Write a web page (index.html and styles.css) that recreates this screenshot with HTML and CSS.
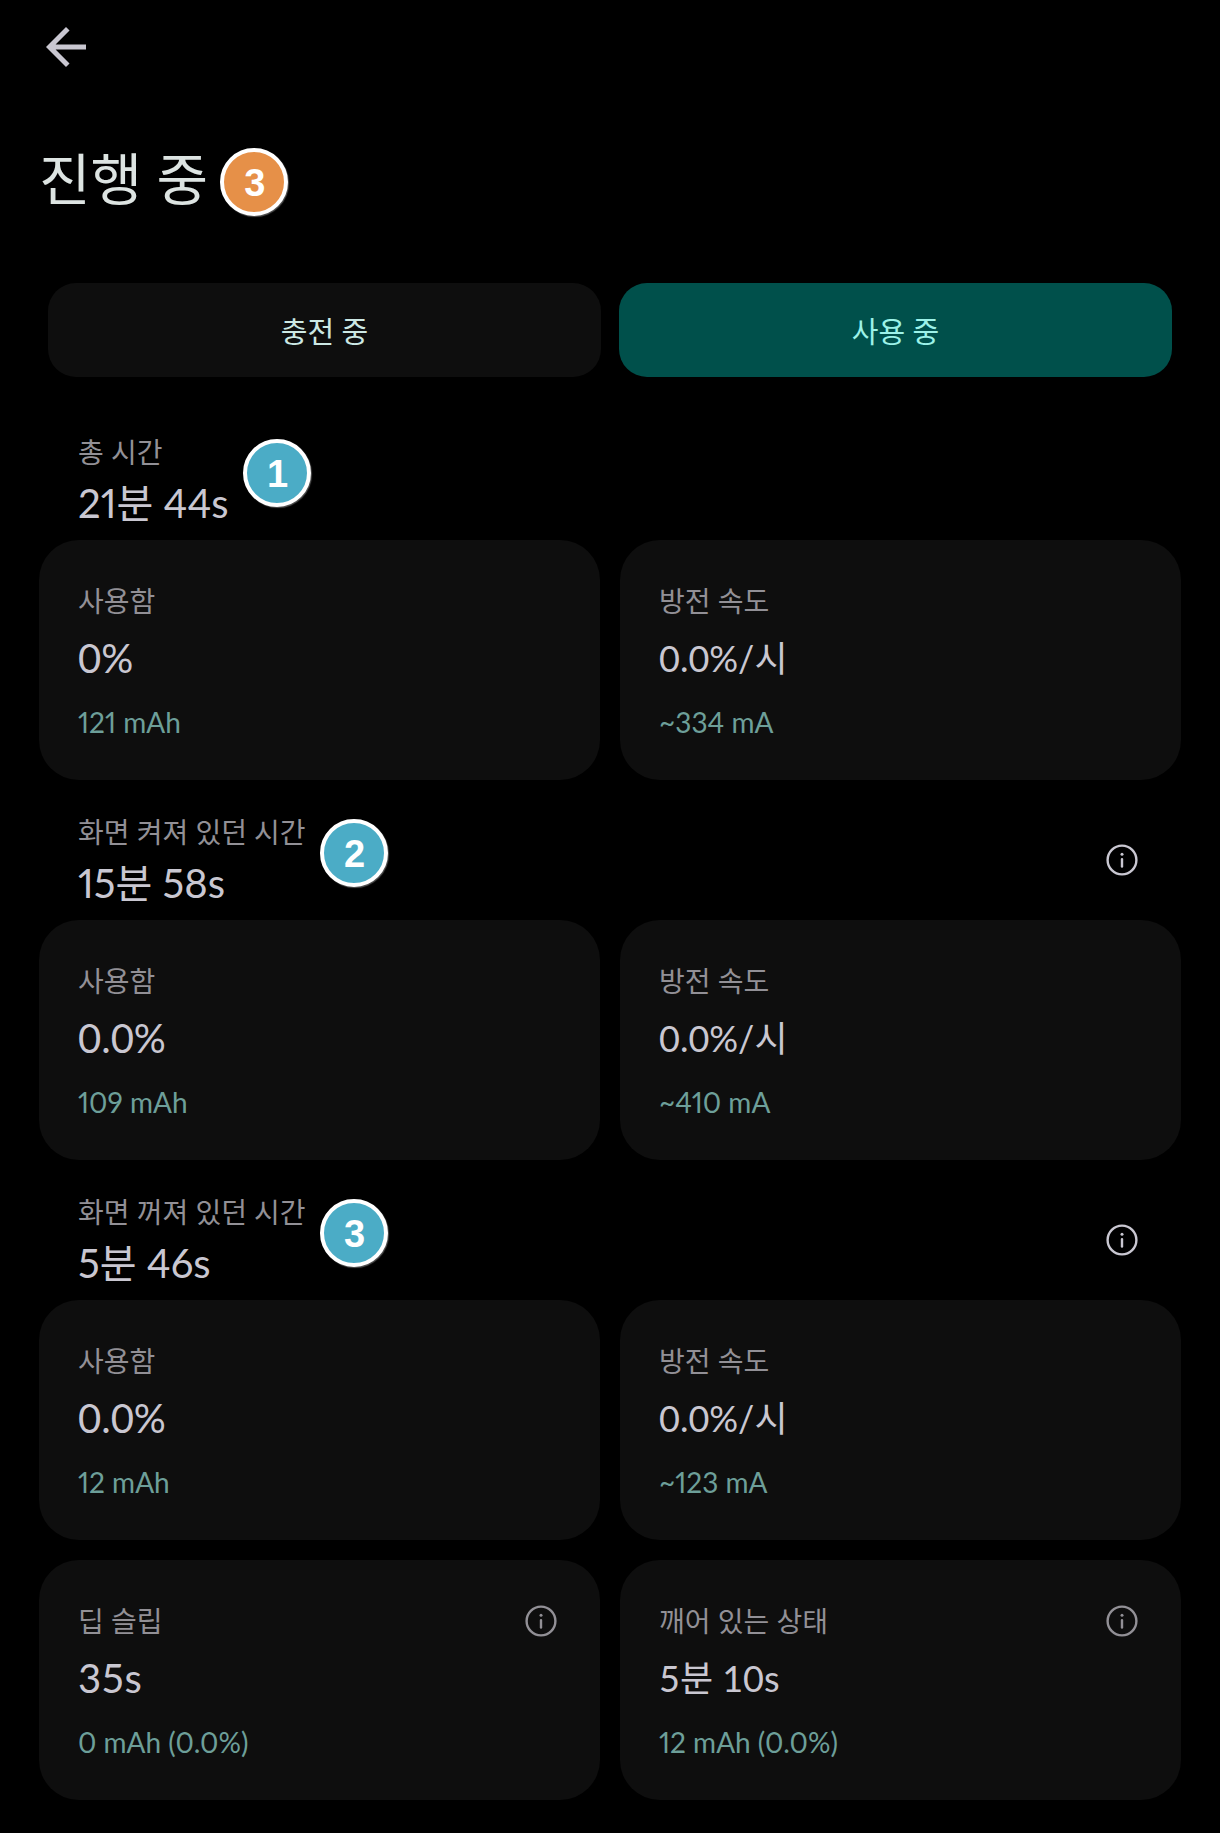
FILE: index.html
```html
<!DOCTYPE html>
<html lang="ko">
<head>
    <meta charset="UTF-8">
    <meta name="viewport" content="width=device-width, initial-scale=1">
    <title>진행 중</title>
    <link rel="stylesheet" href="styles.css">
</head>
<body>
    <!-- Shared info icon -->
    <svg class="sprite" aria-hidden="true">
        <symbol id="info" viewBox="0 0 24 24">
            <circle cx="12" cy="12" r="9.6" fill="none" stroke="currentColor" stroke-width="1.6"/>
            <circle cx="12" cy="8.1" r="1" fill="currentColor"/>
            <path d="M12 11.4v5" fill="none" stroke="currentColor" stroke-width="1.6" stroke-linecap="round"/>
        </symbol>
    </svg>

    <main class="page">
        <button class="back" type="button" aria-label="뒤로">
            <svg viewBox="4 4 16 16"><path fill="currentColor" d="M20 11H7.83l5.59-5.59L12 4l-8 8 8 8 1.41-1.41L7.83 13H20v-2z"/></svg>
        </button>

        <div class="title-row">
            <h1>진행 중</h1>
            <span class="badge badge-orange">3</span>
        </div>

        <div class="tabs" role="tablist">
            <button class="tab" type="button" role="tab" aria-selected="false">충전 중</button>
            <button class="tab active" type="button" role="tab" aria-selected="true">사용 중</button>
        </div>

        <!-- Total time -->
        <section>
            <div class="section-head">
                <div>
                    <h2 class="label">총 시간</h2>
                    <p class="time">21분 44s</p>
                </div>
                <span class="badge">1</span>
            </div>
            <div class="cards">
                <div class="card">
                    <h3 class="label">사용함</h3>
                    <p class="value">0%</p>
                    <p class="sub">121 mAh</p>
                </div>
                <div class="card">
                    <h3 class="label">방전 속도</h3>
                    <p class="value small">0.0%/시</p>
                    <p class="sub">~334 mA</p>
                </div>
            </div>
        </section>

        <!-- Screen on -->
        <section>
            <div class="section-head">
                <div>
                    <h2 class="label">화면 켜져 있던 시간</h2>
                    <p class="time">15분 58s</p>
                </div>
                <span class="badge">2</span>
                <button class="info" type="button" aria-label="정보"><svg><use href="#info"/></svg></button>
            </div>
            <div class="cards">
                <div class="card">
                    <h3 class="label">사용함</h3>
                    <p class="value">0.0%</p>
                    <p class="sub">109 mAh</p>
                </div>
                <div class="card">
                    <h3 class="label">방전 속도</h3>
                    <p class="value small">0.0%/시</p>
                    <p class="sub">~410 mA</p>
                </div>
            </div>
        </section>

        <!-- Screen off -->
        <section>
            <div class="section-head">
                <div>
                    <h2 class="label">화면 꺼져 있던 시간</h2>
                    <p class="time">5분 46s</p>
                </div>
                <span class="badge">3</span>
                <button class="info" type="button" aria-label="정보"><svg><use href="#info"/></svg></button>
            </div>
            <div class="cards">
                <div class="card">
                    <h3 class="label">사용함</h3>
                    <p class="value">0.0%</p>
                    <p class="sub">12 mAh</p>
                </div>
                <div class="card">
                    <h3 class="label">방전 속도</h3>
                    <p class="value small">0.0%/시</p>
                    <p class="sub">~123 mA</p>
                </div>
                <div class="card">
                    <div class="card-head">
                        <h3 class="label">딥 슬립</h3>
                        <button class="info" type="button" aria-label="정보"><svg><use href="#info"/></svg></button>
                    </div>
                    <p class="value">35s</p>
                    <p class="sub">0 mAh (0.0%)</p>
                </div>
                <div class="card">
                    <div class="card-head">
                        <h3 class="label">깨어 있는 상태</h3>
                        <button class="info" type="button" aria-label="정보"><svg><use href="#info"/></svg></button>
                    </div>
                    <p class="value small">5분 10s</p>
                    <p class="sub">12 mAh (0.0%)</p>
                </div>
            </div>
        </section>
    </main>
</body>
</html>
```

FILE: styles.css
```css
* {
    box-sizing: border-box;
}

body {
    margin: 0;
    background-color: #000;
    color: #c9c7d1;
    font-family: Lato, "Noto Sans CJK KR", sans-serif;
    font-variant-numeric: proportional-nums;
}

h1, h2, h3, p {
    margin: 0;
    font-weight: 400;
}

button {
    padding: 0;
    border: none;
    background: none;
    color: inherit;
    font-family: inherit;
    cursor: pointer;
}

svg {
    display: block;
}

.sprite {
    position: absolute;
    width: 0;
    height: 0;
}

.page {
    padding: 27px 39px 33px;
}

.back {
    display: block;
    margin-left: 7px;
}

.back svg {
    width: 40px;
    height: 40px;
}

/* Title */
.title-row {
    display: flex;
    align-items: flex-start;
    gap: 12px;
    margin-top: 81px;
}

h1 {
    color: #dde4e2;
    font-size: 56px;
    line-height: 62px;
}

.badge {
    display: flex;
    align-items: center;
    justify-content: center;
    width: 68px;
    height: 68px;
    padding: 2px 0 0 2px;
    border: 4px solid #fff;
    border-radius: 50%;
    background-color: #4bacc6;
    box-shadow: 1px 1px 1px #555;
    color: #fff;
    font: bold 38px "Liberation Sans", Arial, sans-serif;
}

.badge-orange {
    background-color: #e69048;
}

/* Tabs */
.tabs {
    display: grid;
    grid-template-columns: 1fr 1fr;
    gap: 18px;
    margin: 67px 9px 23px;
}

.tab {
    height: 94px;
    border-radius: 28px;
    background-color: #0e0e0e;
    color: #cce8e4;
    font-size: 29px;
}

.tab.active {
    background-color: #00504b;
    color: #9cf2e8;
}

/* Section headers */
.section-head {
    display: flex;
    align-items: flex-start;
    gap: 14px;
    padding: 31px 41px 7px 39px;
}

.section-head .badge {
    margin-top: 8px;
}

.section-head .info {
    margin-top: 31px;
}

.label {
    color: #929096;
    font-size: 28px;
    line-height: 42px;
}

.time {
    font-size: 40px;
    line-height: 60px;
}

.info {
    margin-left: auto;
}

.info svg {
    width: 36px;
    height: 36px;
}

/* Cards */
.cards {
    display: grid;
    grid-template-columns: 1fr 1fr;
    gap: 20px;
}

.card {
    padding: 40px 41px 38px 39px;
    border-radius: 40px;
    background-color: #0e0e0e;
}

.card-head {
    display: flex;
    align-items: center;
    color: #929096;
}

.value {
    margin: 4px 0 12px;
    font-size: 40px;
    line-height: 64px;
    font-variant-numeric: tabular-nums;
}

.value.small {
    font-size: 36px;
}

.sub {
    color: #6d9f99;
    font-size: 28px;
    line-height: 40px;
}
```
